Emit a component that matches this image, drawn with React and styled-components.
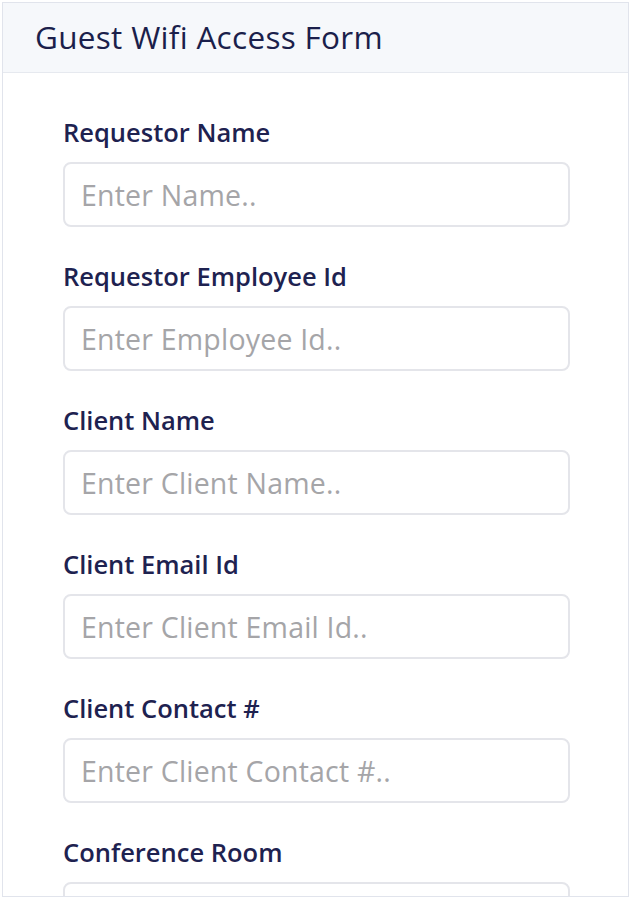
import React from "react";
import styled, { createGlobalStyle } from "styled-components";

const Global = createGlobalStyle`
  html, body { margin: 0; padding: 0; background: #ffffff; }
  body { font-family: "Open Sans", "Noto Sans", sans-serif; }
  * { box-sizing: border-box; }
`;

const Page = styled.div`
  padding: 2px 2px 0 2px;
  height: 900px;
  overflow: hidden;
`;

const Card = styled.div`
  border: 1px solid #e1e4ec;
  height: 895px;
  overflow: hidden;
  background: #ffffff;
`;

const Header = styled.div`
  height: 70px;
  background: #f6f8fb;
  border-bottom: 1px solid #e6e9ef;
  display: flex;
  align-items: center;
  padding-left: 32px;
  padding-bottom: 2px;
`;

const Title = styled.h1`
  margin: 0;
  font-size: 31.5px;
  font-weight: 500;
  color: #1b1f4b;
  letter-spacing: 0.3px;
`;

const Body = styled.div`
  padding: 44px 58px 0 60px;
  display: flex;
  flex-direction: column;
  gap: 34px;
`;

const Field = styled.div`
  display: flex;
  flex-direction: column;
  gap: 15px;
`;

const Label = styled.label`
  font-size: 25.5px;
  line-height: 30px;
  font-weight: 550;
  color: #1e2250;
`;

const Input = styled.input`
  height: 65px;
  width: 100%;
  border: 2px solid #e4e5ea;
  border-radius: 8px;
  padding: 0 16px;
  font-family: inherit;
  font-size: 28.5px;
  letter-spacing: 0.2px;
  color: #333;
  background: #fff;
  outline: none;
  &::placeholder { color: #a5a5a8; }
`;

const fields = [
  ["Requestor Name", "Enter Name.."],
  ["Requestor Employee Id", "Enter Employee Id.."],
  ["Client Name", "Enter Client Name.."],
  ["Client Email Id", "Enter Client Email Id.."],
  ["Client Contact #", "Enter Client Contact #.."],
  ["Conference Room", ""],
];

export default function App() {
  return (
    <>
      <Global />
      <Page>
        <Card>
          <Header>
            <Title>Guest Wifi Access Form</Title>
          </Header>
          <Body>
            {fields.map(([label, ph]) => (
              <Field key={label}>
                <Label>{label}</Label>
                <Input placeholder={ph} />
              </Field>
            ))}
          </Body>
        </Card>
      </Page>
    </>
  );
}
